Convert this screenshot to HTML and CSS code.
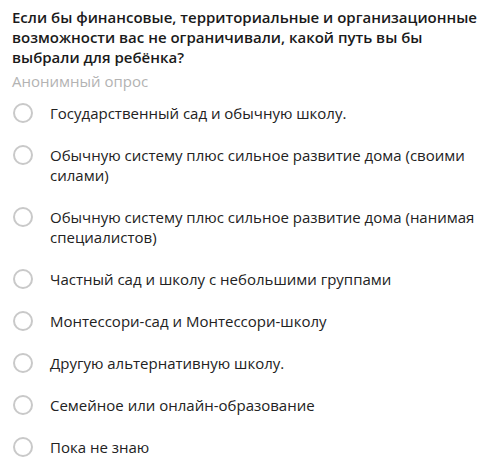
FILE: index.html
```html
<!DOCTYPE html>
<html>
<head>
  <meta charset="utf-8">
  <title>Опрос</title>
  <link rel="stylesheet" href="styles.css">
</head>
<body>
  <div class="poll">
    <h1 class="poll-question">Если бы финансовые, территориальные и организационные возможности вас не ограничивали, какой путь вы бы выбрали для ребёнка?</h1>
    <div class="poll-type">Анонимный опрос</div>

    <ul class="poll-options">
      <li class="option"><span class="radio"></span><span class="option-text">Государственный сад и обычную школу.</span></li>
      <li class="option"><span class="radio"></span><span class="option-text">Обычную систему плюс сильное развитие дома (своими силами)</span></li>
      <li class="option"><span class="radio"></span><span class="option-text">Обычную систему плюс сильное развитие дома (нанимая специалистов)</span></li>
      <li class="option"><span class="radio"></span><span class="option-text">Частный сад и школу с небольшими группами</span></li>
      <li class="option"><span class="radio"></span><span class="option-text">Монтессори-сад и Монтессори-школу</span></li>
      <li class="option"><span class="radio"></span><span class="option-text">Другую альтернативную школу.</span></li>
      <li class="option"><span class="radio"></span><span class="option-text">Семейное или онлайн-образование</span></li>
      <li class="option"><span class="radio"></span><span class="option-text">Пока не знаю</span></li>
    </ul>
  </div>
</body>
</html>
```

FILE: styles.css
```css
body {
  margin: 0;
  background: #fff;
  font-family: "Open Sans", "Noto Sans", sans-serif;
  color: #222;
}

.poll {
  padding: 7px 8px 0 12px;
}

.poll-question {
  margin: 0;
  font-size: 15px;
  font-weight: 600;
  line-height: 20px;
  color: #1a1a1a;
}

.poll-type {
  margin-top: 4px;
  font-size: 15px;
  line-height: 20px;
  color: #b3b3b3;
}

.poll-options {
  list-style: none;
  margin: 12px 0 0;
  padding: 0;
}

.option {
  display: flex;
  align-items: flex-start;
  margin-bottom: 22px;
  font-size: 15px;
  line-height: 20px;
}

.radio {
  flex: none;
  width: 16px;
  height: 16px;
  margin: 0 17px 0 1px;
  border: 2px solid #c9c9c9;
  border-radius: 50%;
}
```
